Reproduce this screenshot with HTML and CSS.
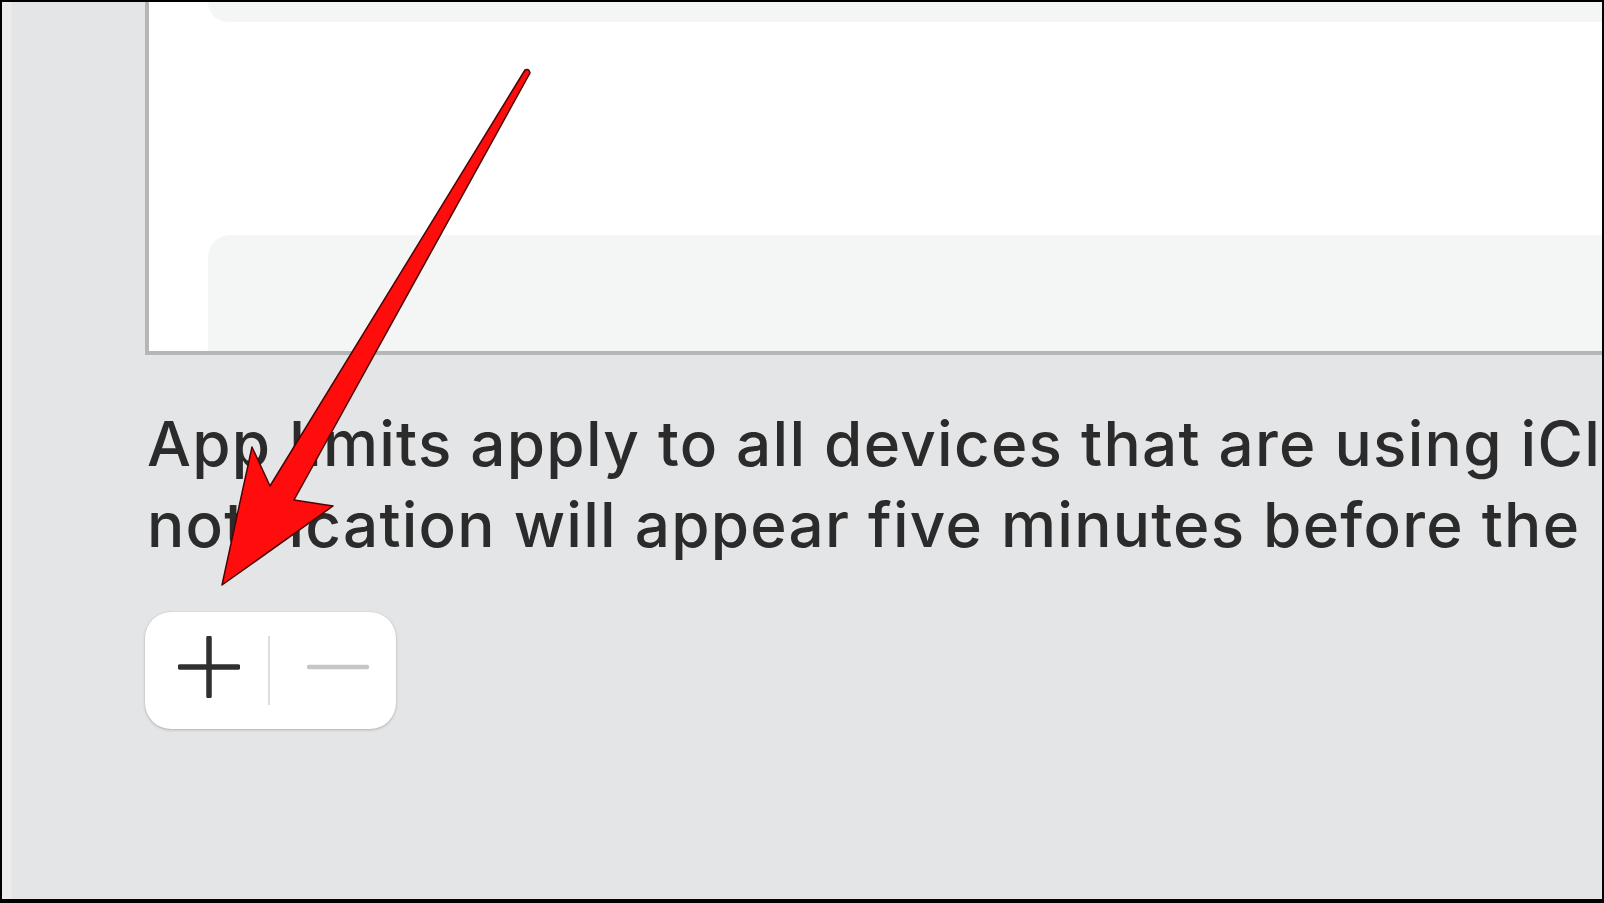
FILE: index.html
```html
<!DOCTYPE html>
<html>

<head>
    <meta charset="utf-8" />
    <title>Screen Time - App Limits</title>
    <link rel="stylesheet" href="styles.css">
</head>

<body>
    <div class="window">
        <div class="sidebar-edge"></div>
        <div class="content">
            <div class="list-panel">
                <div class="list-row first"></div>
                <div class="list-row last"></div>
            </div>

            <p class="note">
                <span>App limits apply to all devices that are using iCloud for Screen Time. A</span><br>
                <span>notification will appear five minutes before the limit is reached.</span>
            </p>

            <div class="add-remove">
                <button class="seg add" title="Add">
                    <svg width="62" height="62" viewBox="0 0 62 62">
                        <path d="M31 2 V60 M2 31 H60" stroke="#303030" stroke-width="5.5" stroke-linecap="round" fill="none" />
                    </svg>
                </button>
                <span class="seg-divider"></span>
                <button class="seg remove" title="Remove" disabled>
                    <svg width="62" height="10" viewBox="0 0 62 10">
                        <path d="M2 5 H60" stroke="#c6c6c6" stroke-width="4.5" stroke-linecap="round" fill="none" />
                    </svg>
                </button>
            </div>
        </div>
    </div>

    <!-- annotation arrow drawn over the screenshot -->
    <svg class="callout" width="1604" height="903" viewBox="0 0 1604 903">
        <path d="M525 70 L270 486 L252 447 L222 585 L333 506 L294 500 L530 73 Q529 68 525 70 Z"
            fill="#ff0d0d" stroke="#4a0505" stroke-width="1.5" stroke-linejoin="round" />
    </svg>
</body>

</html>
```

FILE: styles.css
```css
html,
body {
    margin: 0;
    height: 100%;
}

body {
    background-color: #000;
    padding: 2px 2px 4px 2px;
    box-sizing: border-box;
    font-family: Inter, "Liberation Sans", sans-serif;
    overflow: hidden;
}

.window {
    position: relative;
    display: flex;
    height: 100%;
    background-color: #e4e5e7;
    overflow: hidden;
}

.sidebar-edge {
    flex: none;
    width: 10px;
    background-color: #ebebec;
    border-right: 1px solid #e0e1e3;
}

.content {
    flex: none;
    width: 1700px;
    padding-left: 132px;
}

.list-panel {
    display: flex;
    flex-direction: column;
    justify-content: space-between;
    height: 349px;
    background-color: #fff;
    border-left: 4px solid #b6b6b6;
    border-bottom: 4px solid #b6b6b6;
    padding-left: 59px;
}

.list-row {
    background-color: #f4f5f5;
}

.list-row.first {
    height: 20px;
    border-bottom-left-radius: 22px;
}

.list-row.last {
    height: 116px;
    border-top-left-radius: 22px;
}

.note {
    margin: 48px 0 0 2px;
    font-size: 62px;
    font-weight: 500;
    line-height: 81px;
    letter-spacing: 1.25px;
    color: #2b2b2b;
    white-space: nowrap;
}

.add-remove {
    display: flex;
    align-items: center;
    width: 251px;
    height: 117px;
    margin-top: 47px;
    background-color: #fff;
    border-radius: 26px;
    box-shadow: 0 1px 3px rgba(0, 0, 0, 0.22), 0 0 1px rgba(0, 0, 0, 0.12);
}

.seg {
    flex: 1;
    height: 100%;
    display: flex;
    align-items: center;
    justify-content: center;
    border: none;
    background: none;
    padding: 0;
}

.seg.add {
    padding: 0 0 8px 6px;
}

.seg.remove {
    padding: 0 0 8px 10px;
}

.seg-divider {
    width: 2px;
    height: 69px;
    background-color: #dddddd;
}

.callout {
    position: absolute;
    left: 0;
    top: 0;
    pointer-events: none;
}
```
